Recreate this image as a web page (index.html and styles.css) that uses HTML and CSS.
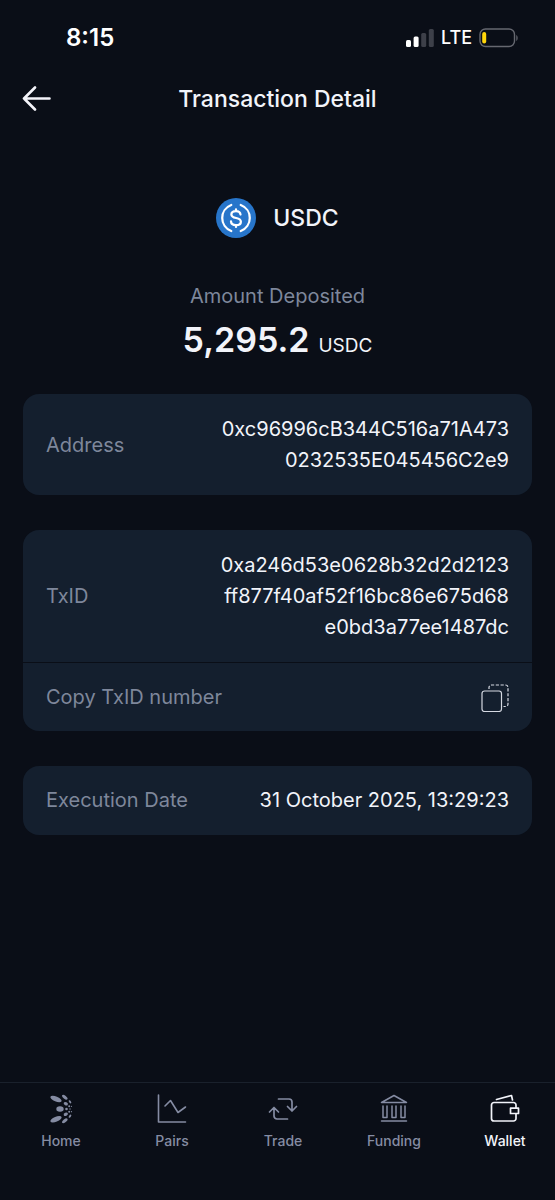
FILE: index.html
```html
<!DOCTYPE html>
<html lang="en">
<head>
<meta charset="utf-8">
<meta name="viewport" content="width=device-width, initial-scale=1">
<title>Transaction Detail</title>
<link rel="stylesheet" href="styles.css">
</head>
<body>
<div class="status">
  <time class="clock">8:15</time>
  <div class="signals">
    <svg width="28" height="18" viewBox="0 0 28 18" aria-hidden="true">
      <rect x="0" y="11" width="5" height="7" rx="1.5" fill="#fff"/>
      <rect x="7.6" y="7.5" width="5" height="10.5" rx="1.5" fill="#fff"/>
      <rect x="15.2" y="4" width="5" height="14" rx="1.5" fill="#3d4049"/>
      <rect x="22.8" y="0" width="5" height="18" rx="1.5" fill="#3d4049"/>
    </svg>
    <span class="network">LTE</span>
    <svg width="40" height="20" viewBox="0 0 40 20" aria-hidden="true">
      <rect x="1" y="1" width="34.5" height="17.5" rx="5.5" fill="none" stroke="#666870" stroke-width="1.4"/>
      <path d="M37.3 7v6c1.8-.8 1.8-5.2 0-6z" fill="#666870"/>
      <rect x="3.2" y="4" width="4" height="11.5" rx="2" fill="#ffd60a"/>
    </svg>
  </div>
</div>
<header class="header">
  <button class="back" type="button" aria-label="Back">
    <svg width="30" height="26" viewBox="0 0 30 26" fill="none" stroke="#f4f4fa" stroke-width="2.6" stroke-linecap="round" stroke-linejoin="round">
      <path d="M27.5 12.500H2M13 1.500 2 12.500l11 11"/>
    </svg>
  </button>
  <h1 class="title">Transaction Detail</h1>
</header>
<main class="main">
  <div class="coin">
    <svg width="40" height="40" viewBox="0 0 32 32" aria-hidden="true">
      <circle cx="16" cy="16" r="16" fill="#2775ca"/>
      <g fill="none" stroke="#fff" stroke-width="1.8" stroke-linecap="round">
        <path d="M12.2 5.600a11.1 11.1 0 0 0 0 20.800M19.8 5.600a11.1 11.1 0 0 1 0 20.800"/>
        <path d="M19.6 13.2c-.2-1.9-1.600-2.800-3.600-2.800-2.200 0-3.700 1-3.700 2.700 0 4 7.600 1.800 7.600 5.800 0 1.800-1.600 2.800-3.900 2.800s-3.900-1.100-4-3M16 9v1.200M16 21.900v1.200"/>
      </g>
    </svg>
    <span class="coin-name">USDC</span>
  </div>
  <p class="amount-label">Amount Deposited</p>
  <p class="amount"><strong class="amount-value">5,295.2</strong> <span class="amount-unit">USDC</span></p>

  <section class="card">
    <div class="row">
      <span class="label">Address</span>
      <span class="value">0xc96996cB344C516a71A473<br>0232535E045456C2e9</span>
    </div>
  </section>
  <section class="card">
    <div class="row">
      <span class="label">TxID</span>
      <span class="value">0xa246d53e0628b32d2d2123<br>ff877f40af52f16bc86e675d68<br>e0bd3a77ee1487dc</span>
    </div>
    <button class="row single copy" type="button">
      <span class="label">Copy TxID number</span>
      <svg width="28" height="28" viewBox="0 0 28 28" fill="none" stroke="#d5d9e2" stroke-width="1.2" aria-hidden="true">
        <rect x="1" y="7" width="19.5" height="20.5" rx="2.5"/>
        <path d="M8 5V3.500A2.500 2.500 0 0 1 10.500 1H24.500A2.500 2.500 0 0 1 27 3.500V20A2.500 2.500 0 0 1 24.500 22.500H22.500" stroke-dasharray="3.2 1.6"/>
      </svg>
    </button>
  </section>
  <section class="card">
    <div class="row single">
      <span class="label">Execution Date</span>
      <span class="value">31 October 2025, 13:29:23</span>
    </div>
  </section>
</main>
<nav class="tabs">
  <a class="tab" href="#home">
    <svg width="30" height="30" viewBox="0 0 30 30" fill="currentColor" aria-hidden="true">
      <ellipse cx="10" cy="5" rx="6" ry="2.500" transform="rotate(22 10 5)"/>
      <ellipse cx="10" cy="25.200" rx="6" ry="2.500" transform="rotate(-22 10 25.200)"/>
      <ellipse cx="14" cy="15" rx="3.700" ry="2.700"/>
      <ellipse cx="18.800" cy="3.200" rx="3.300" ry="1.500" transform="rotate(38 18.800 3.200)"/>
      <ellipse cx="18.800" cy="26.800" rx="3.300" ry="1.500" transform="rotate(-38 18.800 26.800)"/>
      <ellipse cx="19.800" cy="9.800" rx="2.200" ry="1.600" transform="rotate(25 19.800 9.800)"/>
      <ellipse cx="19.800" cy="20.200" rx="2.200" ry="1.600" transform="rotate(-25 19.800 20.200)"/>
      <circle cx="20.500" cy="15" r="1.300"/>
      <ellipse cx="24" cy="7.800" rx="1.800" ry="1" transform="rotate(55 24 7.800)"/>
      <ellipse cx="24" cy="22.200" rx="1.800" ry="1" transform="rotate(-55 24 22.200)"/>
      <circle cx="23.200" cy="12.200" r="1"/><circle cx="23.200" cy="17.800" r="1"/>
      <circle cx="25.500" cy="12.300" r=".6"/><circle cx="25.500" cy="17.700" r=".6"/><circle cx="24" cy="15" r=".7"/>
    </svg>
    <span>Home</span>
  </a>
  <a class="tab" href="#pairs">
    <svg width="30" height="30" viewBox="0 0 30 30" fill="none" stroke="currentColor" stroke-width="1.600" stroke-linecap="round" stroke-linejoin="round" aria-hidden="true">
      <path d="M1.500 1v27h27M8 12l5.500-5.500L21 18.500 28.500 13"/>
    </svg>
    <span>Pairs</span>
  </a>
  <a class="tab" href="#trade">
    <svg width="30" height="30" viewBox="0 0 30 30" fill="none" stroke="currentColor" stroke-width="1.700" stroke-linecap="round" stroke-linejoin="round" aria-hidden="true">
      <path d="M10.500 5H21a3 3 0 0 1 3 3V17M19.500 12.500l4.500 4.500 4.500-4.500M19.500 25H9a3 3 0 0 1-3-3V13.500M1.500 18 6 13.500l4.500 4.500"/>
    </svg>
    <span>Trade</span>
  </a>
  <a class="tab" href="#funding">
    <svg width="30" height="30" viewBox="0 0 30 30" fill="none" stroke="currentColor" stroke-width="1.500" stroke-linecap="round" stroke-linejoin="round" aria-hidden="true">
      <path d="M2.500 8.500 15 1.500l12.500 7zM2.500 27h25M4 12v11.500h4V12M13 12v11.500h4V12M22 12v11.500h4V12"/>
    </svg>
    <span>Funding</span>
  </a>
  <a class="tab active" href="#wallet" aria-current="page">
    <svg width="30" height="30" viewBox="0 0 30 30" fill="none" stroke="currentColor" stroke-width="1.700" stroke-linecap="round" stroke-linejoin="round" aria-hidden="true">
      <path d="M26 14V11a2.500 2.500 0 0 0-2.500-2.500H4A2.500 2.500 0 0 0 1.500 11v13.500A2.500 2.500 0 0 0 4 27h19.500a2.500 2.500 0 0 0 2.500-2.500V20M6.500 5.500 21.500 1.500 22.500 6"/>
      <rect x="20.500" y="14.200" width="8" height="5.300"/>
    </svg>
    <span>Wallet</span>
  </a>
</nav>
</body>
</html>
```
FILE: styles.css
```css
* {
  box-sizing: border-box;
}

body {
  margin: 0;
  min-height: 100vh;
  display: flex;
  flex-direction: column;
  background: #0a0e17;
  color: #f2f4fa;
  font-family: Inter, "Liberation Sans", sans-serif;
  font-size: 20px;
}

.status {
  display: flex;
  justify-content: space-between;
  align-items: center;
  padding: 23px 36px 0 66px;
  line-height: 30px;
}

.clock {
  color: #fff;
  font-size: 24px;
  font-weight: 600;
}

.signals {
  display: flex;
  align-items: center;
  gap: 7px;
}

.network {
  color: #fff;
  font-size: 18px;
  font-weight: 500;
}

.header {
  display: grid;
  grid-template-columns: 32px 1fr 32px;
  align-items: center;
  padding: 30px 22px 0;
}

.back {
  display: flex;
  padding: 0;
  border: 0;
  background: none;
}

.title {
  margin: 0;
  text-align: center;
  font-size: 23px;
  font-weight: 500;
  line-height: 32px;
}

.main {
  flex: 1;
  padding: 83px 23px 40px;
}

.coin {
  display: flex;
  justify-content: center;
  align-items: center;
  gap: 17px;
}

.coin-name {
  font-size: 23px;
  font-weight: 500;
}

.amount-label {
  margin: 42px 0 0;
  text-align: center;
  color: #7e879b;
  line-height: 32px;
}

.amount {
  display: flex;
  justify-content: center;
  align-items: baseline;
  gap: 9px;
  margin: 4px 0 24px;
  line-height: 48px;
}

.amount-value {
  font-size: 34px;
  font-weight: 600;
}

.amount-unit {
  font-size: 19px;
}

.card {
  margin-bottom: 35px;
  border-radius: 16px;
  background: #141f2e;
  overflow: hidden;
}

.row {
  display: flex;
  justify-content: space-between;
  align-items: center;
  width: 100%;
  padding: 20px 23px 19px;
  line-height: 31px;
}

.single {
  padding-top: 19px;
}

.label {
  color: #7e879b;
}

.value {
  text-align: right;
}

.copy {
  padding-bottom: 18px;
  border: 0;
  border-top: 1px solid #0a0e17;
  background: none;
  font: inherit;
  line-height: 31px;
}

.tabs {
  display: flex;
  justify-content: space-between;
  padding: 11px 20px 49px 31px;
  border-top: 1px solid #1a212c;
}

.tab {
  display: flex;
  flex-direction: column;
  align-items: center;
  gap: 7px;
  width: 60px;
  color: #858ca3;
  font-size: 14px;
  font-weight: 500;
  line-height: 20px;
  text-decoration: none;
}

.tab.active {
  color: #f2f4fa;
}
```
